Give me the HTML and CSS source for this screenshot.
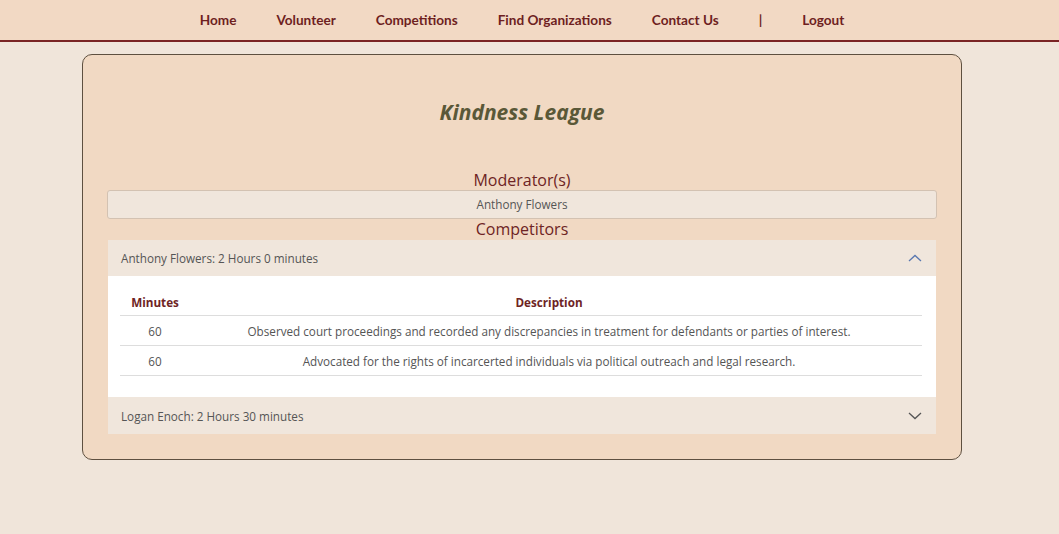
FILE: index.html
```html
<!DOCTYPE html>
<html>
<head>
<meta charset="utf-8">
<link rel="stylesheet" href="styles.css">
</head>
<body>
<nav class="nav">
  <div class="nav-inner">
    <a class="nav-link">Home</a>
    <a class="nav-link">Volunteer</a>
    <a class="nav-link">Competitions</a>
    <a class="nav-link">Find Organizations</a>
    <a class="nav-link">Contact Us</a>
    <span class="nav-link">|</span>
    <a class="nav-link">Logout</a>
  </div>
</nav>
<div class="page">
  <main class="card">
    <h1 class="title">Kindness League</h1>
    <h2 class="section-title mod-title">Moderator(s)</h2>
    <div class="mod-box">Anthony Flowers</div>
    <h2 class="section-title">Competitors</h2>
    <div class="accordion">
      <div class="acc-item">
        <div class="acc-header open">
          <span>Anthony Flowers: 2 Hours 0 minutes</span>
          <svg class="chev up" width="14" height="8" viewBox="0 0 14 8"><path d="M1 7 L7 1.5 L13 7" fill="none" stroke="currentColor" stroke-width="1.3"/></svg>
        </div>
        <div class="acc-body">
          <table class="tbl">
            <thead>
              <tr><th class="c-min">Minutes</th><th class="c-desc">Description</th></tr>
            </thead>
            <tbody>
              <tr><td class="c-min">60</td><td class="c-desc">Observed court proceedings and recorded any discrepancies in treatment for defendants or parties of interest.</td></tr>
              <tr><td class="c-min">60</td><td class="c-desc">Advocated for the rights of incarcerted individuals via political outreach and legal research.</td></tr>
            </tbody>
          </table>
        </div>
      </div>
      <div class="acc-item">
        <div class="acc-header">
          <span>Logan Enoch: 2 Hours 30 minutes</span>
          <svg class="chev" width="14" height="8" viewBox="0 0 14 8"><path d="M1 1 L7 6.5 L13 1" fill="none" stroke="currentColor" stroke-width="1.3"/></svg>
        </div>
      </div>
    </div>
  </main>
</div>
</body>
</html>
```
FILE: styles.css
```css
html, body {
  margin: 0;
  padding: 0;
  background: #f0e5da;
}
body {
  font-family: "Open Sans", "Noto Sans", sans-serif;
  color: #555;
}
.page {
  width: 1044px;
}
.nav {
  height: 40px;
  background: #f2d9c4;
  border-bottom: 2px solid #7a2424;
}
.nav-inner {
  width: 1044px;
  height: 40px;
  display: flex;
  justify-content: center;
  align-items: center;
  gap: 40px;
}
.nav-link {
  font-family: "Lato", sans-serif;
  font-weight: 700;
  font-size: 13.6px;
  color: #6e1f1f;
}
.card {
  width: 830px;
  margin: 12px auto 0;
  background: #f1d9c3;
  border: 1px solid #5e5040;
  border-radius: 10px;
  padding: 42px 24px 25px;
}
.title {
  margin: 0 0 43px;
  text-align: center;
  font-size: 21px;
  font-style: italic;
  font-weight: 700;
  color: #5a5838;
  line-height: 30px;
}
.section-title {
  margin: 0;
  text-align: center;
  font-size: 16px;
  font-weight: 400;
  color: #6e2424;
  line-height: 20px;
}
.mod-title {
  margin-top: 5px;
}
.mod-box {
  height: 27px;
  background: #f0e6dc;
  border: 1px solid #d3c2b2;
  border-radius: 3px;
  text-align: center;
  font-size: 11.7px;
  line-height: 27px;
  color: #555;
}
.accordion {
  margin: 1px 1px 0;
}
.acc-header {
  height: 36px;
  background: #f0e6dc;
  display: flex;
  align-items: center;
  justify-content: space-between;
  padding: 0 14px 0 13px;
  font-size: 11.7px;
  color: #555;
}
.acc-item + .acc-item .acc-header {
  height: 37px;
}
.chev {
  color: #555;
}
.chev.up {
  color: #5a78b0;
}
.acc-body {
  background: #fff;
  padding: 12px 14px 21px 12px;
}
.tbl {
  width: 100%;
  border-collapse: collapse;
  font-size: 11.7px;
}
.tbl th {
  color: #6e2424;
  font-weight: 700;
  height: 27px;
  border-bottom: 1px solid #ddd;
  padding: 0;
}
.tbl td {
  height: 29px;
  border-bottom: 1px solid #ddd;
  padding: 0;
  color: #555;
}
.tbl .c-min {
  width: 70px;
  text-align: center;
}
.tbl .c-desc {
  text-align: center;
  padding-right: 14px;
}
```
